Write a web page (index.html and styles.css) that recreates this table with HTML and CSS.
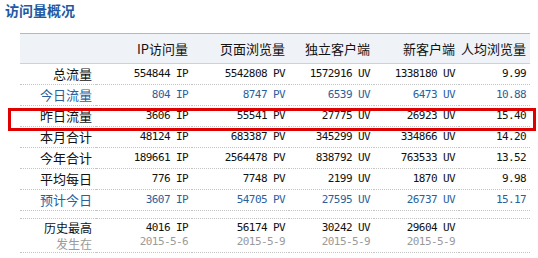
FILE: index.html
```html
<!DOCTYPE html>
<html lang="zh">
<head>
<meta charset="utf-8">
<link rel="stylesheet" href="styles.css">
</head>
<body>
<div class="page">
  <h1 class="title">访问量概况</h1>
  <table class="stats">
    <colgroup>
      <col class="c1"><col class="c2"><col class="c3"><col class="c4"><col class="c5"><col class="c6">
    </colgroup>
    <thead>
      <tr><th></th><th>IP访问量</th><th>页面浏览量</th><th>独立客户端</th><th>新客户端</th><th>人均浏览量</th></tr>
    </thead>
    <tbody>
      <tr><td class="lbl">总流量</td><td>554844 IP</td><td>5542808 PV</td><td>1572916 UV</td><td>1338180 UV</td><td>9.99</td></tr>
      <tr class="blue"><td class="lbl">今日流量</td><td>804 IP</td><td>8747 PV</td><td>6539 UV</td><td>6473 UV</td><td>10.88</td></tr>
      <tr><td class="lbl">昨日流量</td><td>3606 IP</td><td>55541 PV</td><td>27775 UV</td><td>26923 UV</td><td>15.40</td></tr>
      <tr><td class="lbl">本月合计</td><td>48124 IP</td><td>683387 PV</td><td>345299 UV</td><td>334866 UV</td><td>14.20</td></tr>
      <tr><td class="lbl">今年合计</td><td>189661 IP</td><td>2564478 PV</td><td>838792 UV</td><td>763533 UV</td><td>13.52</td></tr>
      <tr><td class="lbl">平均每日</td><td>776 IP</td><td>7748 PV</td><td>2199 UV</td><td>1870 UV</td><td>9.98</td></tr>
      <tr class="blue"><td class="lbl">预计今日</td><td>3607 IP</td><td>54705 PV</td><td>27595 UV</td><td>26737 UV</td><td>15.17</td></tr>
      <tr class="gap"><td></td><td></td><td></td><td></td><td></td><td></td></tr>
      <tr class="peak">
        <td class="lbl"><div>历史最高</div><div class="grey">发生在</div></td>
        <td><div>4016 IP</div><div class="grey">2015-5-6</div></td>
        <td><div>56174 PV</div><div class="grey">2015-5-9</div></td>
        <td><div>30242 UV</div><div class="grey">2015-5-9</div></td>
        <td><div>29604 UV</div><div class="grey">2015-5-9</div></td>
        <td></td>
      </tr>
    </tbody>
  </table>
  <div class="mark"></div>
</div>
</body>
</html>
```
FILE: styles.css
```css
html, body {
  margin: 0;
  padding: 0;
  background: #fff;
}
.page {
  position: relative;
  width: 538px;
  height: 258px;
  overflow: hidden;
}
.title {
  margin: 0;
  height: 33px;
  padding-left: 5px;
  font-family: "Noto Sans CJK SC", sans-serif;
  font-size: 14px;
  line-height: 20px;
  font-weight: bold;
  color: #1d5aa3;
}
.stats {
  margin-left: 20px;
  width: 510px;
  border-collapse: collapse;
  table-layout: fixed;
  border-top: 1px solid #9dbde2;
}
.c1 { width: 76px; }
.c2 { width: 96px; }
.c3 { width: 97px; }
.c4 { width: 85px; }
.c5 { width: 85px; }
.c6 { width: 71px; }
.stats th {
  height: 29px;
  padding: 0 4px 0 0;
  background: #eff2f6;
  border-bottom: 1px solid #c3d4e8;
  text-align: right;
  font-family: "Noto Sans CJK SC", sans-serif;
  font-size: 13px;
  font-weight: normal;
  color: #111;
  white-space: nowrap;
}
.stats td {
  height: 20px;
  padding: 0 4px 0 0;
  border-bottom: 1px dotted #c4c4c4;
  text-align: right;
  font-family: "DejaVu Sans Mono", "Noto Sans CJK SC", monospace;
  font-size: 11px;
  letter-spacing: -0.6px;
  line-height: 20px;
  color: #111;
  white-space: nowrap;
}
.stats td.lbl {
  font-family: "Noto Sans CJK SC", sans-serif;
  font-size: 13px;
  letter-spacing: 0;
}
.stats tr.blue td {
  color: #2a5f9e;
}
.stats tr.gap td {
  height: 7px;
  line-height: 7px;
}
.stats tr.peak td {
  height: 33px;
  line-height: 14px;
  vertical-align: top;
  padding-top: 2px;
  box-sizing: border-box;
}
.stats tr.peak td.lbl {
  font-size: 12px;
  line-height: 16px;
  padding-top: 1px;
}
.grey {
  color: #9a9a9a;
}
.mark {
  position: absolute;
  left: 8px;
  top: 108px;
  width: 528px;
  height: 23px;
  border: 3px solid #e00000;
  box-sizing: border-box;
}
```
